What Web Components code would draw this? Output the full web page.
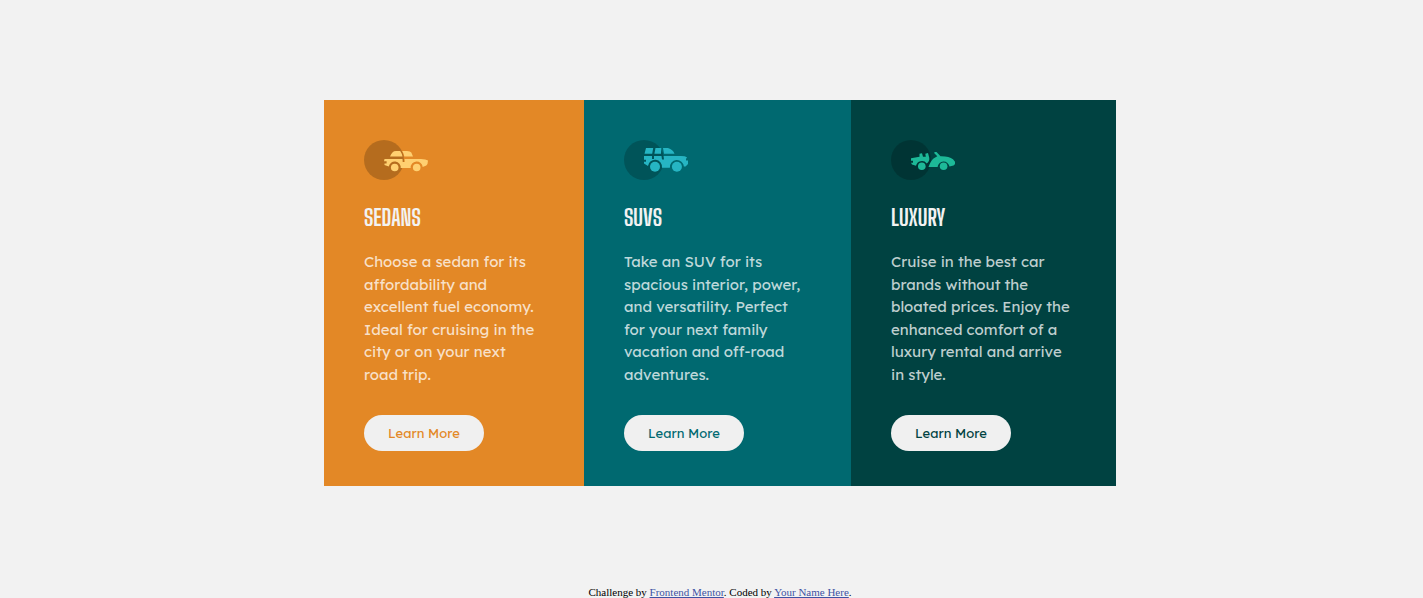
<!DOCTYPE html>
<html lang="en">
<head>
<meta charset="utf-8">
<meta name="viewport" content="width=device-width, initial-scale=1">
<title>3-column preview card</title>
<style>
  body { margin: 0; background: #f2f2f2; }
</style>
</head>
<body>
<preview-page>
  <car-card kind="sedan">
    <span slot="title">SEDANS</span>
    Choose a sedan for its affordability and excellent fuel economy. Ideal for cruising in the city or on your next road trip.
  </car-card>
  <car-card kind="suv">
    <span slot="title">SUVS</span>
    Take an SUV for its spacious interior, power, and versatility. Perfect for your next family vacation and off-road adventures.
  </car-card>
  <car-card kind="luxury">
    <span slot="title">LUXURY</span>
    Cruise in the best car brands without the bloated prices. Enjoy the enhanced comfort of a luxury rental and arrive in style.
  </car-card>
  <page-credit slot="footer"></page-credit>
</preview-page>

<script>
const icons = {
  sedan: `<g fill="#ffd071">
    <path d="M26 16.6C27.500 13 29 11 32 11H36.200Q38 13.500 38.500 16.600ZM38.200 11H43Q46.500 11 47.300 12.500L49 16.600H40.300Q39.800 13.500 38.200 11Z"/>
    <path d="M20.500 19H38.500Q38.700 20.500 38.700 22H40.700Q40.700 20.500 40.500 19H57Q62 19.300 64 20.500Q64 24 62.300 25.500L58.700 27A6 6 0 0 0 46.700 28H36.700A6 6 0 0 0 24.800 26.500L20.500 25V23.500H22.600V21.300H20Z"/>
    <circle cx="30.700" cy="27.500" r="3.800"/><circle cx="52.700" cy="27.500" r="3.800"/></g>`,
  suv: `<g fill="#26b5c3">
    <path d="M22 8H29.200L28.200 13.700H20.500ZM31.500 8H37.300L37 13.700H30.400ZM39 8H44Q49 9.500 50.500 13.700H40Z"/>
    <path d="M20 16H28V19H30V16H37.500L38 19.500H40L39.600 16H57Q61 16 63 17.300L62 19V20.500H64V24L61.500 26.500H59.900A7 7 0 0 0 45.900 27.700H38A7 7 0 0 0 24 26L20 23.600V21.700H22V19.700H20Z"/>
    <circle cx="31" cy="26.800" r="5"/><circle cx="52.900" cy="26.800" r="5"/></g>`,
  luxury: `<g fill="#1db998">
    <path d="M20 18.200L28.500 16.700V13.800L31 13.200L32 16.800H34.800L34.300 13.800L37 13L38.200 17.500Q39 21 35.700 23.500A6 6 0 0 0 25 25.800L21 24.500L20 22.700H22V20.700H20Z"/>
    <path d="M43.500 12L45.500 11.900L49.500 16.200Q58 16 62 19.300L64 21.700Q64.500 24.500 62.500 25.500L58.500 26.600A6 6 0 0 0 46.600 27H37.500Q39.500 21 42.500 18.500L46.300 16.200L43.300 13.200Z"/>
    <circle cx="30.800" cy="26.300" r="3.800"/><circle cx="52.600" cy="26.300" r="3.800"/></g>`
};

customElements.define('preview-page', class extends HTMLElement {
  constructor() {
    super();
    this.attachShadow({ mode: 'open' }).innerHTML = `
      <style>
        :host { display: block; padding: 100px 0 0 17px; }
        main { display: grid; grid-template-columns: 260fr 267fr 265fr; max-width: 792px; margin: 0 auto 100px; }
        @media (max-width: 700px) {
          :host { padding-left: 0; }
          main { grid-template-columns: 1fr; }
        }
      </style>
      <main><slot></slot></main>
      <slot name="footer"></slot>`;
  }
});

customElements.define('car-card', class extends HTMLElement {
  constructor() {
    super();
    this.attachShadow({ mode: 'open' }).innerHTML = `
      <style>
        :host { display: block; box-sizing: border-box; padding: 40px 40px 35px; background: var(--tone); }
        :host([kind="sedan"]) { --tone: #e38826; }
        :host([kind="suv"]) { --tone: #006970; }
        :host([kind="luxury"]) { --tone: #004241; }
        svg { display: block; }
        h1 { margin: 22px 0 19px; font: 700 23px/30px "Big Shoulders Display", "Roboto Condensed", Roboto, sans-serif; color: #f2f2f2; }
        p { margin: 0 0 29px; padding-right: 2px; font: 400 15px/1.5 "Lexend Deca", Inter, sans-serif; color: rgba(255, 255, 255, .75); }
        button { display: block; width: 120px; height: 36px; padding: 0; border: 0; border-radius: 18px; background: #f0f0f0; color: var(--tone); font: 400 13px/20px "Lexend Deca", Inter, sans-serif; cursor: pointer; }
      </style>
      <svg width="64" height="40" viewBox="0 0 64 40" aria-hidden="true">
        <circle cx="20" cy="20" r="20" fill="#000" opacity=".2"/>${icons[this.getAttribute('kind')]}
      </svg>
      <h1><slot name="title"></slot></h1>
      <p><slot></slot></p>
      <button type="button">Learn More</button>`;
  }
});

customElements.define('page-credit', class extends HTMLElement {
  constructor() {
    super();
    this.attachShadow({ mode: 'open' }).innerHTML = `
      <style>
        :host { display: block; text-align: center; font: 11px/12px "Liberation Serif", serif; color: #000; }
        a { color: #3e52a3; }
      </style>
      Challenge by <a href="https://www.frontendmentor.io?ref=challenge">Frontend Mentor</a>. Coded by <a href="#">Your Name Here</a>.`;
  }
});
</script>
</body>
</html>
